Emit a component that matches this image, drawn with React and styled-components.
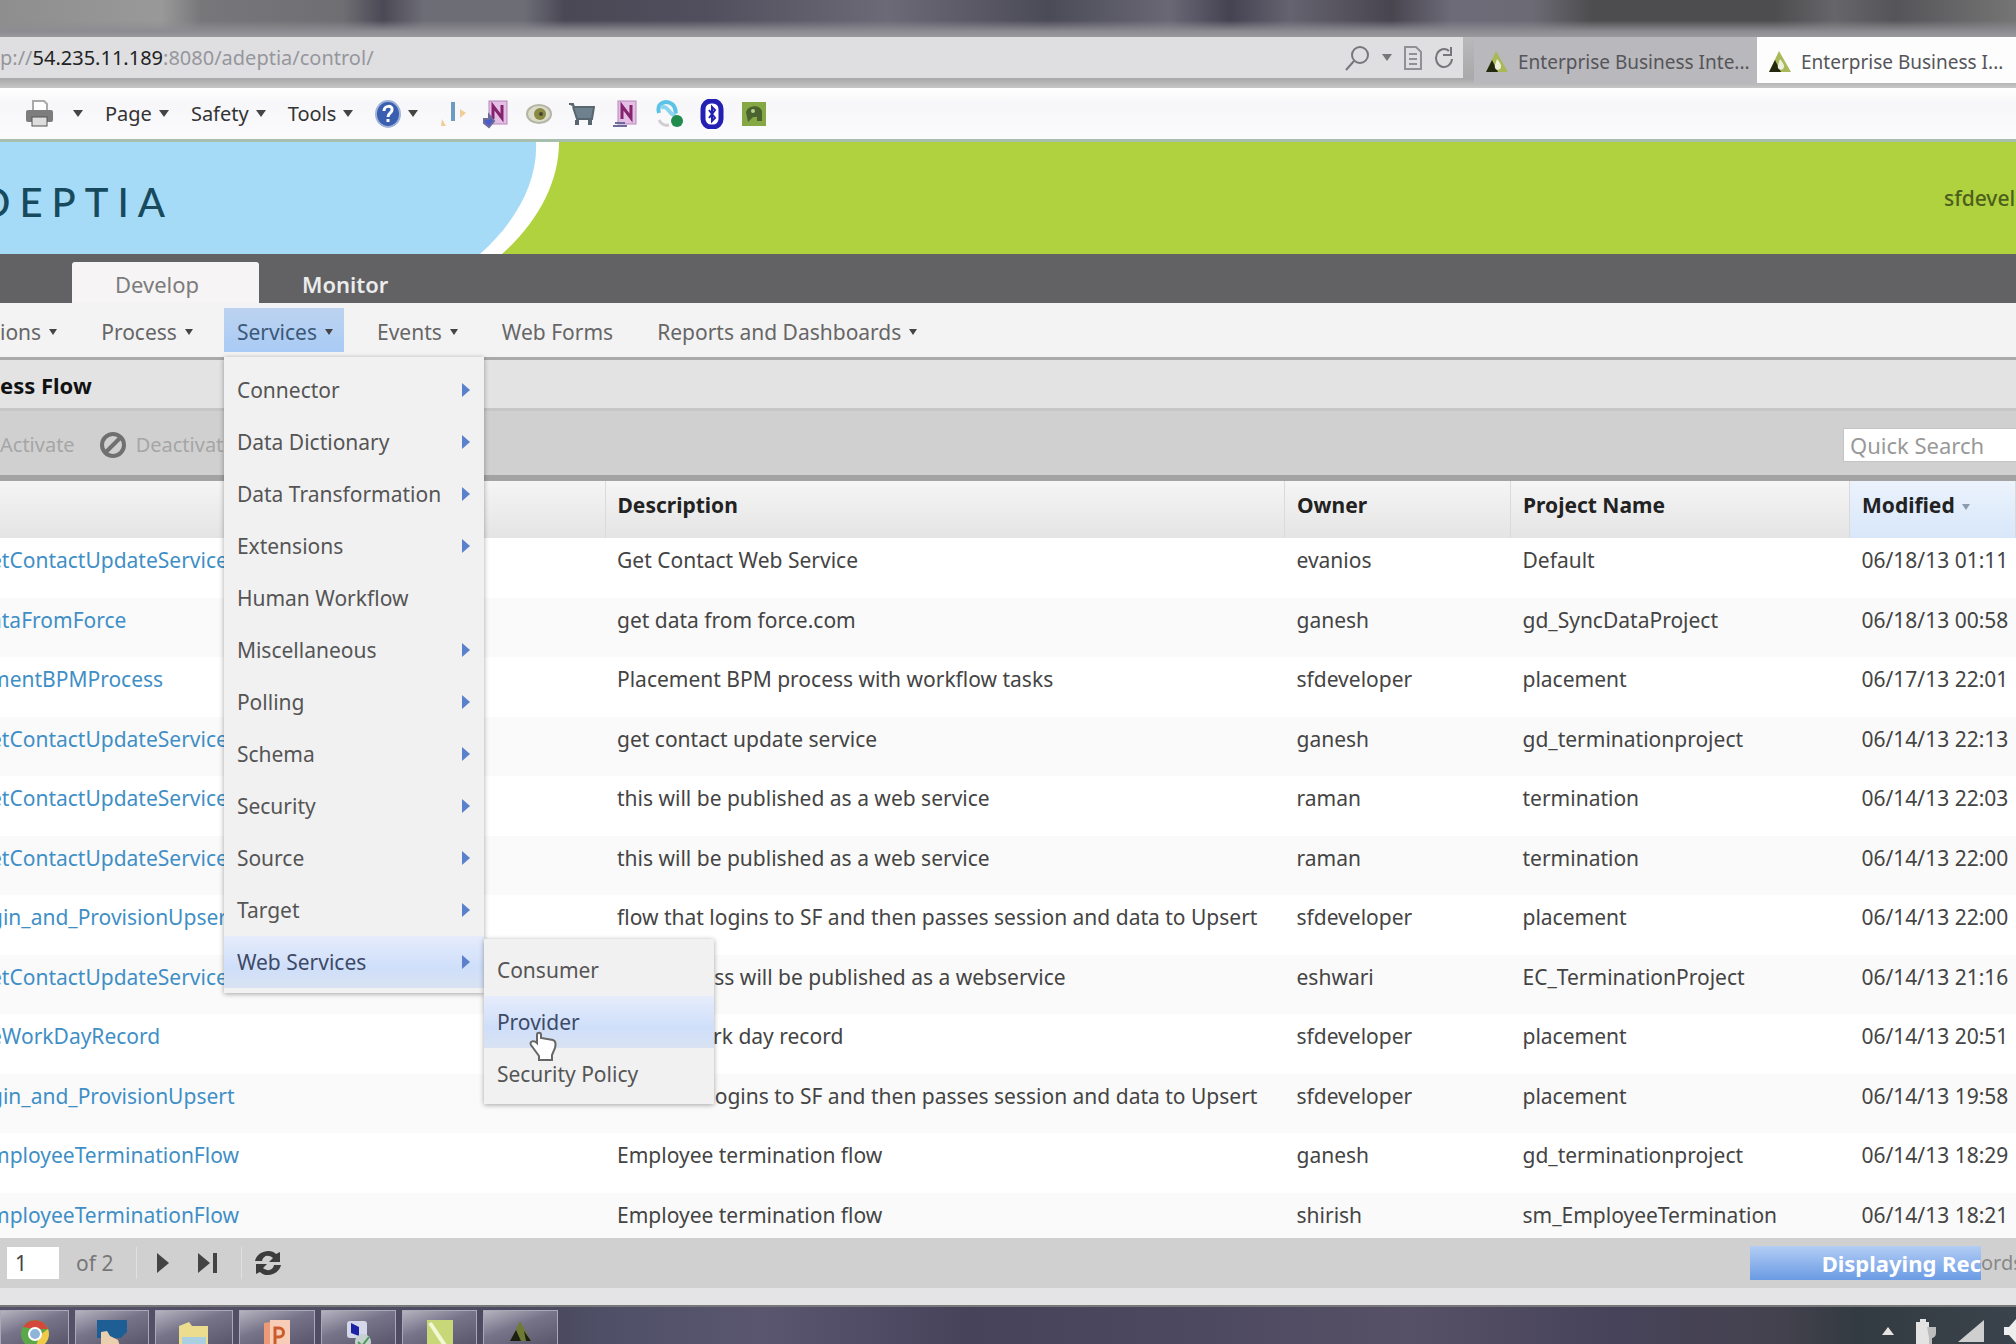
import React from 'react'
import styled, { createGlobalStyle } from 'styled-components'

const GlobalStyle = createGlobalStyle`
  * { box-sizing: border-box; }
  body {
    margin: 0;
    font-family: 'Noto Sans', 'Open Sans', sans-serif;
    font-size: 21px;
    line-height: 28px;
    color: #444;
  }
  button, input { font: inherit; color: inherit; }
  button { border: 0; padding: 0; background: none; }
  ul { margin: 0; padding: 0; list-style: none; }
  svg { display: block; flex: none; }
`

const Screen = styled.div`
  height: 100vh;
  display: flex;
  flex-direction: column;
  overflow: hidden;
  background: #e4e4e5;
  white-space: nowrap;
`

/* browser chrome */

const WindowFrame = styled.div`
  flex: none;
  height: 37px;
  background:
    linear-gradient(to bottom, transparent 55%, #8d8c92 85%, #9a999d),
    linear-gradient(to right, #8e8e8e 0, #999 8%, #77777a 10%, #6f6e73 17%, #4b4955 19%, #6d6d76 21%, #6d6d76 26%, #4a4855 28%, #514f5d 35%, #6c6a76 44%, #4b4a57 52%, #6a6875 58%, #454352 61%, #65636f 64%, #48454f 69%, #6d6b78 72%, #6c6a74 76%, #4d4d4f 79%, #4d4d4f 88%, #66666a 91%, #555559 94%, #757575 100%);
`

const AddressRow = styled.div`
  flex: none;
  display: flex;
  height: 51px;
  background: linear-gradient(#b9b8bb 0, #a9a9a9 82%, #c6c6c6 100%);
`

const AddressBar = styled.div`
  flex: 1;
  display: flex;
  align-items: center;
  gap: 12px;
  height: 41px;
  margin-right: 11px;
  padding-right: 9px;
  background: #dfdfe2;
  overflow: hidden;
`

const Url = styled.div`
  flex: 1;
  color: #96969c;
  font-size: 20px;

  b { font-weight: 400; color: #222; }
`

const BrowserTab = styled.button`
  display: flex;
  align-items: center;
  gap: 9px;
  width: ${p => (p.$active ? 259 : 283)}px;
  height: 46px;
  padding: 4px 4px 0 11px;
  font-size: 19px;
  color: #55555a;
  background: ${p => (p.$active ? '#fdfdfe' : '#b9b8bc')};
`

const CommandBar = styled.div`
  flex: none;
  display: flex;
  align-items: center;
  height: 54px;
  padding-left: 25px;
  gap: 22px;
  border-bottom: 3px solid #a9bfae;
  background: linear-gradient(#fff, #f7f7f9 30%, #fbfbfe);
`

const Command = styled.button`
  display: flex;
  align-items: center;
  gap: ${p => p.$gap || 7}px;
  font-size: 20px;
  color: #333;
`

const AddOns = styled.div`
  display: flex;
  gap: 17px;
`

/* product header */

const Banner = styled.header`
  flex: none;
  display: flex;
  align-items: center;
  height: 112px;
  background: #b0d23f;
`

const Brand = styled.div`
  display: flex;
  align-items: center;
  width: 480px;
  height: 100%;
  padding-top: 8px;
  background: #a6dbf8;
  color: #174a5c;
  font: 500 40px/48px Lato, sans-serif;
  letter-spacing: 9px;
  overflow: hidden;

  span { margin-left: -20px; }
`

const UserName = styled.div`
  width: 72px;
  margin-left: auto;
  overflow: hidden;
  font-weight: 500;
  color: #4c5f1c;
`

const TabStrip = styled.nav`
  flex: none;
  display: flex;
  align-items: flex-end;
  height: 49px;
  padding-left: 72px;
  background: #626264;
`

const ModeTab = styled.button`
  width: 187px;
  height: 41px;
  padding: 3px 0 0 43px;
  border-radius: 3px 3px 0 0;
  text-align: left;
  color: ${p => (p.$active ? '#7c7c7c' : '#ececec')};
  font-size: 22px;
  font-weight: ${p => (p.$active ? 400 : 600)};
  background: ${p => (p.$active ? '#f6f4f5' : 'transparent')};
`

const MenuBar = styled.nav`
  flex: none;
  display: flex;
  align-items: center;
  gap: 20px;
  height: 57px;
  border-bottom: 3px solid #a9a9aa;
  background: #f4f3f4;
`

const MenuSlot = styled.div`
  position: relative;
`

const MenuButton = styled.button`
  display: flex;
  align-items: center;
  gap: 8px;
  height: 44px;
  padding: 3px 11px 0 ${p => (p.$cut ? 0 : 13)}px;
  color: ${p => (p.$open ? '#3c5878' : '#666')};
  background: ${p => (p.$open ? 'linear-gradient(#bcd3f0, #a9cbf5)' : 'none')};
`

const Caret = styled.span`
  border: ${p => p.$size || 4}px solid transparent;
  border-top: ${p => (p.$size || 4) + 2}px solid ${p => p.$color || '#444'};
  border-bottom: 0;
`

const Dropdown = styled.ul`
  position: absolute;
  z-index: 2;
  top: 49px;
  left: 0;
  width: 260px;
  padding: 7px 0 5px;
  background: #f1f1f2;
  box-shadow: 0 1px 5px rgba(0, 0, 0, 0.35);
`

const SubMenu = styled(Dropdown)`
  top: 3px;
  left: 260px;
  width: 230px;
  padding: 5px 0 4px;
`

const MenuItem = styled.li`
  position: relative;
  height: 52px;
  background: ${p => (p.$hot ? 'linear-gradient(#e6ecfb, #cfdffa 60%, #d8e2f2)' : 'none')};
`

const ItemButton = styled.button`
  display: flex;
  align-items: center;
  justify-content: space-between;
  width: 100%;
  height: 100%;
  padding: 0 14px 0 13px;
  color: ${p => (p.$hot ? '#3d4a66' : '#555')};
`

const SideArrow = styled.span`
  border: 7px solid transparent;
  border-left: 8px solid #5b80cc;
  border-right: 0;
`

const Pointer = styled.svg`
  position: absolute;
  top: 30px;
  left: 44px;
`

/* grid panel */

const PanelTitle = styled.h1`
  flex: none;
  margin: 0;
  height: 48px;
  font-size: 22px;
  line-height: 50px;
  color: #111;
  background: #e3e3e4;
`

const GridToolbar = styled.div`
  flex: none;
  display: flex;
  align-items: center;
  height: 73px;
  padding-top: 3px;
  border-top: 3px solid #c6c6c6;
  border-bottom: 6px solid #a3a3a3;
  background: #d0d0d0;
`

const ToolButton = styled.button`
  display: flex;
  align-items: center;
  gap: 9px;
  margin-right: 24px;
  font-size: 20px;
  color: #a6a6a6;
`

const SearchBox = styled.input`
  width: 173px;
  height: 34px;
  margin-left: auto;
  padding: 0 6px;
  border: 1px solid #c4c4c4;
  border-right: 0;
  font-size: 22px;
  background: #fff;

  &::placeholder { color: #999; opacity: 1; }
`

const GridBody = styled.div`
  flex: 1 1 0;
  min-height: 0;
  overflow: hidden;
  background: #fff;
`

const Table = styled.table`
  width: 100%;
  table-layout: fixed;
  border-collapse: collapse;
`

const Th = styled.th`
  height: 57px;
  padding: 0 12px 10px;
  text-align: left;
  color: #222;
  border-right: 1px solid #dadada;
  background: ${p => (p.$sorted ? 'linear-gradient(#ebf2fc, #d8e7fa)' : 'linear-gradient(#f5f5f5, #e4e4e4)')};

  span { display: inline-block; margin-left: 7px; vertical-align: middle; }
`

const Row = styled.tr`
  height: 60px;
  background: #fff;

  &:nth-child(even) {
    height: 59px;
    background: #fafafa;
  }
`

const Td = styled.td`
  padding: 8px 0 0 12px;
  vertical-align: top;
  overflow: hidden;

  a {
    margin-left: -22px;
    color: #3f8fc6;
    text-decoration: none;
  }
`

const Pager = styled.footer`
  flex: none;
  display: flex;
  align-items: center;
  height: 67px;
  padding-left: 7px;
  border-bottom: 17px solid #e4e4e6;
  background: #d0d0d0;
`

const PageInput = styled.input`
  width: 52px;
  height: 32px;
  padding: 0 8px;
  border: 0;
  background: #fff;
`

const PageCount = styled.span`
  width: 64px;
  padding-left: 17px;
  color: #777;
`

const PagerButton = styled.button`
  display: flex;
  align-items: center;
  justify-content: center;
  height: 32px;
  width: ${p => p.$width}px;
  margin-left: ${p => (p.$divided ? 13 : 0)}px;
  border-left: ${p => (p.$divided ? '1px solid #e0e0e0' : '0')};
`

const Progress = styled.div`
  display: flex;
  align-items: center;
  width: 266px;
  height: 34px;
  margin-left: auto;
  overflow: hidden;
  font-size: 20px;
  color: #888;
`

const ProgressFill = styled.div`
  display: flex;
  flex: none;
  align-items: center;
  justify-content: flex-end;
  width: 231px;
  height: 100%;
  font-size: 22px;
  font-weight: 700;
  color: #fff;
  background: linear-gradient(#b3cdf4, #6a9be4);
`

/* windows taskbar */

const Taskbar = styled.div`
  flex: none;
  display: flex;
  gap: 6px;
  height: 39px;
  padding-top: 3px;
  border-top: 2px solid #777;
  background: linear-gradient(to right, #55526a 0, #4b4a60 28%, #4f5068 30%, #5b5670 38%, #46435b 48%, #4c4860 58%, #565166 70%, #47435a 80%, #45424f 88%, #333b42 92%, #3a434b 100%);
  overflow: hidden;
`

const TaskButton = styled.button`
  display: flex;
  justify-content: center;
  align-items: flex-start;
  width: ${p => p.$width}px;
  padding-top: 8px;
  border: 1px solid #aaa8b6;
  border-bottom: 0;
  background: linear-gradient(160deg, #b5b3bf, #77748a 45%, #59566c);
`

const Tray = styled.div`
  display: flex;
  align-items: center;
  gap: 20px;
  margin-left: auto;
  padding-top: 8px;
`

const menuItems = ['Connector', 'Data Dictionary', 'Data Transformation', 'Extensions', 'Human Workflow', 'Miscellaneous', 'Polling', 'Schema', 'Security', 'Source', 'Target', 'Web Services']

const rows = [
  ['etContactUpdateService', 'Get Contact Web Service', 'evanios', 'Default', '06/18/13 01:11'],
  ['ataFromForce', 'get data from force.com', 'ganesh', 'gd_SyncDataProject', '06/18/13 00:58'],
  ['mentBPMProcess', 'Placement BPM process with workflow tasks', 'sfdeveloper', 'placement', '06/17/13 22:01'],
  ['etContactUpdateService', 'get contact update service', 'ganesh', 'gd_terminationproject', '06/14/13 22:13'],
  ['etContactUpdateService', 'this will be published as a web service', 'raman', 'termination', '06/14/13 22:03'],
  ['etContactUpdateService', 'this will be published as a web service', 'raman', 'termination', '06/14/13 22:00'],
  ['gin_and_ProvisionUpsert', 'flow that logins to SF and then passes session and data to Upsert', 'sfdeveloper', 'placement', '06/14/13 22:00'],
  ['etContactUpdateService', 'this process will be published as a webservice', 'eshwari', 'EC_TerminationProject', '06/14/13 21:16'],
  ['eWorkDayRecord', 'create work day record', 'sfdeveloper', 'placement', '06/14/13 20:51'],
  ['gin_and_ProvisionUpsert', 'flow that logins to SF and then passes session and data to Upsert', 'sfdeveloper', 'placement', '06/14/13 19:58'],
  ['mployeeTerminationFlow', 'Employee termination flow', 'ganesh', 'gd_terminationproject', '06/14/13 18:29'],
  ['mployeeTerminationFlow', 'Employee termination flow', 'shirish', 'sm_EmployeeTermination', '06/14/13 18:21'],
]

const AdeptiaMark = () => (
  <svg width="24" height="24" viewBox="0 0 24 24">
    <path d="M11 1 L23 22 H1 Z" fill="#a9b95a" />
    <path d="M7 10 L13 22 H1 Z" fill="#23290f" />
    <path d="M12 9 c4 5 5 7 3 10 c-3 2 -6 0 -5 -4z" fill="#eef0dc" />
  </svg>
)

const Note = ({ badge }) => (
  <svg width="26" height="30" viewBox="0 0 26 30">
    <rect x="6" y="2" width="18" height="23" fill="#e3bfe3" stroke="#b787bd" />
    <path d="M10 20V7l9 12V6" fill="none" stroke="#85236f" strokeWidth="3" />
    <path d={badge ? 'M1 20h5v-4l5 6-5 6-5-4z' : 'M1 27h14M3 24h10'} fill={badge ? '#4b5cc8' : 'none'} stroke="#6d6a9c" strokeWidth="2" />
  </svg>
)

const Cart = () => (
  <svg width="26" height="30" viewBox="0 0 26 30">
    <path d="M0 5h4l1 3h20l-2 12H8L4 8" fill="#6d818e" stroke="#58666f" strokeWidth="2" />
    <path d="M8 21v5M21 21v5" stroke="#58666f" strokeWidth="4" />
  </svg>
)

class App extends React.Component {

  renderChrome() {
    return (
      <>
        <WindowFrame />
        <AddressRow>
          <AddressBar>
            <Url>p://<b>54.235.11.189</b>:8080/adeptia/control/</Url>
            <svg width="25" height="26" viewBox="0 0 25 26" fill="none" stroke="#77777b" strokeWidth="2">
              <circle cx="15" cy="10" r="8" />
              <path d="M9 16 L1 25" />
            </svg>
            <Caret $size={5} $color="#77777b" />
            <svg width="18" height="24" viewBox="0 0 18 24" fill="none" stroke="#909095" strokeWidth="2">
              <path d="M1 1h11l5 5v17H1zM5 8h8M5 13h8M5 18h8" />
            </svg>
            <svg width="20" height="24" viewBox="0 0 20 24" fill="none" stroke="#77777b" strokeWidth="2">
              <path d="M15 5A8 9 0 1 0 18 13M17 1v8h-8" />
            </svg>
          </AddressBar>
          <BrowserTab><AdeptiaMark />Enterprise Business Inte...</BrowserTab>
          <BrowserTab $active><AdeptiaMark />Enterprise Business I...</BrowserTab>
        </AddressRow>
        <CommandBar>
          <Command $gap={19} aria-label="Print">
            <svg width="29" height="30" viewBox="0 0 29 30">
              <path d="M8 12V2h11l3 3v7" fill="#fff" stroke="#aaa" strokeWidth="2" />
              <rect x="1" y="11" width="27" height="12" rx="2" fill="#7d7d7d" />
              <rect x="7" y="18" width="15" height="9" fill="#ddd" stroke="#555" />
            </svg>
            <Caret $size={5} />
          </Command>
          <Command>Page<Caret $size={5} /></Command>
          <Command>Safety<Caret $size={5} /></Command>
          <Command>Tools<Caret $size={5} /></Command>
          <Command aria-label="Help">
            <svg width="26" height="28" viewBox="0 0 26 28">
              <ellipse cx="13" cy="14" rx="12" ry="13" fill="#3a5fb0" stroke="#9fb3d8" strokeWidth="2" />
              <path d="M9 11c0-6 9-6 8-1c0 3-4 3-4 7M13 19v3" fill="none" stroke="#fff" strokeWidth="3" />
            </svg>
            <Caret $size={5} />
          </Command>
          <AddOns>
            <svg width="26" height="30" viewBox="0 0 26 30">
              <path d="M11 3h4v19h-4z" fill="#6d9cc0" />
              <path d="M2 20l4 7H1zM20 10l6 4-6 5z" fill="#f1cd96" />
            </svg>
            <Note badge />
            <svg width="26" height="30" viewBox="0 0 26 30">
              <ellipse cx="13" cy="15" rx="12" ry="9" fill="#dcdccb" stroke="#b5b5a4" strokeWidth="2" />
              <circle cx="14" cy="15" r="6" fill="#8b8a45" />
              <circle cx="15" cy="15" r="2" fill="#44452c" />
            </svg>
            <Cart />
            <Note />
            <svg width="28" height="30" viewBox="0 0 28 30">
              <path d="M4 14C1 3 12 1 17 5c5 4 3 8 4 10" fill="none" stroke="#5cc3e6" strokeWidth="4" />
              <path d="M6 9c4-3 6 1 9 4c2 3 4 3 6 3" fill="none" stroke="#8ad4ee" strokeWidth="4" />
              <path d="M4 21c2 4 6 6 10 5" fill="none" stroke="#cfcfcf" strokeWidth="3" />
              <circle cx="22" cy="22" r="6" fill="#1f8b4c" />
            </svg>
            <svg width="24" height="30" viewBox="0 0 24 30">
              <rect x="3" y="2" width="18" height="26" rx="8" fill="#fff" stroke="#2420b4" strokeWidth="5" />
              <path d="M9 11l6 8-3 3V8l3 3-6 8" fill="none" stroke="#2420b4" strokeWidth="2" />
            </svg>
            <svg width="26" height="30" viewBox="0 0 26 30">
              <rect x="1" y="3" width="24" height="24" fill="#86a844" />
              <path d="M5 13c2-7 14-8 16-1v10h-5v-4h-4l-5 5z" fill="#4a6130" />
              <circle cx="12" cy="12" r="2" fill="#b9cf8a" />
            </svg>
          </AddOns>
        </CommandBar>
      </>
    )
  }

  renderServicesMenu() {
    return (
      <Dropdown>
        {menuItems.map(label => {
          const hot = label === 'Web Services'
          return (
            <MenuItem key={label} $hot={hot}>
              <ItemButton $hot={hot}>
                {label}
                {label !== 'Human Workflow' && <SideArrow />}
              </ItemButton>
              {hot && (
                <SubMenu>
                  <MenuItem><ItemButton>Consumer</ItemButton></MenuItem>
                  <MenuItem $hot>
                    <ItemButton $hot>Provider</ItemButton>
                    <Pointer width="30" height="36" viewBox="0 0 30 36">
                      <path d="M9 17V9c0-3 4-3 4 0v3l12 2c3 1 3 4 2 8l-3 7v5H11v-4L3 19c-2-4 3-5 6-2z" fill="#fff" stroke="#666" strokeWidth="2" />
                    </Pointer>
                  </MenuItem>
                  <MenuItem><ItemButton>Security Policy</ItemButton></MenuItem>
                </SubMenu>
              )}
            </MenuItem>
          )
        })}
      </Dropdown>
    )
  }

  renderTable() {
    return (
      <GridBody>
        <Table>
          <colgroup>
            <col width="605" />
            <col />
            <col width="226" />
            <col width="339" />
            <col width="166" />
          </colgroup>
          <thead>
            <tr>
              <Th aria-label="Name" />
              <Th>Description</Th>
              <Th>Owner</Th>
              <Th>Project Name</Th>
              <Th $sorted>Modified<Caret $color="#8b9bb0" /></Th>
            </tr>
          </thead>
          <tbody>
            {rows.map((row, i) => (
              <Row key={i}>
                {row.map((cell, j) => <Td key={j}>{j === 0 ? <a href="#flow">{cell}</a> : cell}</Td>)}
              </Row>
            ))}
          </tbody>
        </Table>
      </GridBody>
    )
  }

  renderPager() {
    return (
      <Pager>
        <PageInput defaultValue="1" aria-label="Page" />
        <PageCount>of 2</PageCount>
        <PagerButton $divided $width={52} aria-label="Next page">
          <svg width="12" height="20" viewBox="0 0 12 20"><path d="M0 0l12 10L0 20z" fill="#444" /></svg>
        </PagerButton>
        <PagerButton $width={40} aria-label="Last page">
          <svg width="20" height="20" viewBox="0 0 20 20"><path d="M0 0l12 10L0 20zM15 0h4v20h-4z" fill="#444" /></svg>
        </PagerButton>
        <PagerButton $divided $width={52} aria-label="Refresh">
          <svg width="28" height="28" viewBox="0 0 28 28" fill="#3c3c3c">
            <path d="M1 12C3 2 17-1 22 5l4-2v10H15l4-4C14 5 9 7 8 12z" />
            <path d="M27 16C25 26 11 29 6 23l-4 2V15h11l-4 4c5 4 10 2 11-3z" />
          </svg>
        </PagerButton>
        <Progress>
          <ProgressFill>Displaying Rec</ProgressFill>
          ords
        </Progress>
      </Pager>
    )
  }

  renderTaskbar() {
    return (
      <Taskbar>
        <TaskButton $width={69} aria-label="Chrome">
          <svg width="30" height="30" viewBox="0 0 30 30">
            <circle cx="15" cy="15" r="14" fill="#5aa84a" />
            <path d="M3 8A14 14 0 0 1 28 10H15z" fill="#d4483b" />
            <path d="M28 10A14 14 0 0 1 15 29l5-13z" fill="#f0cb4a" />
            <circle cx="15" cy="15" r="6" fill="#8fb4d8" stroke="#fff" strokeWidth="2" />
          </svg>
        </TaskButton>
        <TaskButton $width={74} aria-label="Remote session">
          <svg width="32" height="30" viewBox="0 0 32 30">
            <path d="M1 1h30v12l-6 6H1z" fill="#1d5f94" />
            <path d="M5 13l6-1 3 5 8 4 2 6H5z" fill="#ead0ae" />
          </svg>
        </TaskButton>
        <TaskButton $width={78} aria-label="Explorer">
          <svg width="32" height="30" viewBox="0 0 32 30">
            <path d="M1 7l10-4 3 4h16v22H1z" fill="#ecdc8e" />
            <path d="M4 18h24v12H4z" fill="#a9cfe0" />
          </svg>
        </TaskButton>
        <TaskButton $width={76} aria-label="PowerPoint">
          <svg width="30" height="30" viewBox="0 0 30 30">
            <path d="M2 4L20 1v29H2z" fill="#ee9a76" />
            <rect x="8" y="1" width="20" height="29" fill="#f8cdb8" />
            <path d="M13 26V9h4c6 0 6 9 0 9h-4" fill="none" stroke="#cc5c2c" strokeWidth="3" />
          </svg>
        </TaskButton>
        <TaskButton $width={75} aria-label="Network">
          <svg width="30" height="30" viewBox="0 0 30 30">
            <rect x="3" y="2" width="20" height="17" rx="3" fill="#d5d8e8" />
            <path d="M7 4l8 4v9l-8-3z" fill="#1c22a4" />
            <circle cx="19" cy="23" r="8" fill="#c5d2cf" />
            <path d="M14 23l4 4 7-9" fill="none" stroke="#4c9a55" strokeWidth="2" />
          </svg>
        </TaskButton>
        <TaskButton $width={75} aria-label="Editor">
          <svg width="28" height="30" viewBox="0 0 28 30">
            <rect x="1" y="1" width="26" height="30" fill="#c8d878" />
            <path d="M4 4l16 24" stroke="#f3f7d5" strokeWidth="4" />
          </svg>
        </TaskButton>
        <TaskButton $width={75} aria-label="Adeptia">
          <svg width="24" height="24" viewBox="0 0 24 24">
            <path d="M11 2L22 22H2z" fill="#6f7a35" />
            <path d="M7 11l5 11H1zM15 12l7 10h-5z" fill="#1c2010" />
          </svg>
        </TaskButton>
        <Tray>
          <svg width="12" height="8" viewBox="0 0 12 8"><path d="M6 0l6 8H0z" fill="#e4e4e4" /></svg>
          <svg width="24" height="26" viewBox="0 0 24 26">
            <path d="M2 4h4V1h6v3h3v22H2z" fill="#e3e3e3" />
            <path d="M13 9h9v6c0 4-3 5-4 5v6h-3v-6z" fill="#bdbdbd" />
          </svg>
          <svg width="26" height="22" viewBox="0 0 26 22"><path d="M26 0v22H0z" fill="#cfcfcf" /></svg>
          <svg width="12" height="24" viewBox="0 0 12 24"><path d="M0 8h5l7-8v24l-7-8H0z" fill="#eee" /></svg>
        </Tray>
      </Taskbar>
    )
  }

  render() {
    return (
      <Screen>
        <GlobalStyle />
        {this.renderChrome()}
        <Banner>
          <Brand><span>DEPTIA</span></Brand>
          <svg width="80" height="112" viewBox="0 0 80 112">
            <path d="M0 0H79C79 40 58 80 22 112H0z" fill="#fff" />
            <path d="M0 0H56C58 40 36 80 0 112z" fill="#a6dbf8" />
          </svg>
          <UserName>sfdeveloper</UserName>
        </Banner>
        <TabStrip>
          <ModeTab $active>Develop</ModeTab>
          <ModeTab>Monitor</ModeTab>
        </TabStrip>
        <MenuBar>
          <MenuButton $cut>ions<Caret /></MenuButton>
          <MenuButton>Process<Caret /></MenuButton>
          <MenuSlot>
            <MenuButton $open>Services<Caret /></MenuButton>
            {this.renderServicesMenu()}
          </MenuSlot>
          <MenuButton>Events<Caret /></MenuButton>
          <MenuButton>Web Forms</MenuButton>
          <MenuButton>Reports and Dashboards<Caret /></MenuButton>
        </MenuBar>
        <PanelTitle>ess Flow</PanelTitle>
        <GridToolbar>
          <ToolButton>Activate</ToolButton>
          <ToolButton>
            <svg width="28" height="28" viewBox="0 0 28 28" fill="none" stroke="#707070" strokeWidth="4">
              <circle cx="14" cy="14" r="11" />
              <path d="M7 21L21 7" />
            </svg>
            Deactivate
          </ToolButton>
          <SearchBox placeholder="Quick Search" aria-label="Quick Search" />
        </GridToolbar>
        {this.renderTable()}
        {this.renderPager()}
        {this.renderTaskbar()}
      </Screen>
    )
  }
}

export default App
